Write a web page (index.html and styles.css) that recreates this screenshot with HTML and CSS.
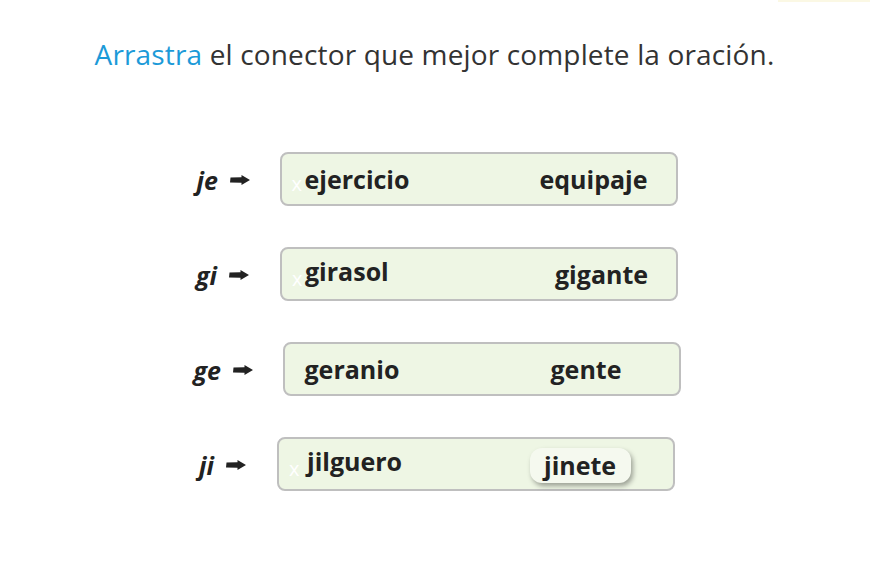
FILE: index.html
```html
<!DOCTYPE html>
<html lang="es">
<head>
<meta charset="utf-8">
<title>Arrastra el conector</title>
<link rel="stylesheet" href="styles.css">
</head>
<body>
<div class="page">
  <div class="topbar"><span class="topline"></span></div>
  <h1 class="title"><span class="accent">Arrastra</span> el conector que mejor complete la oración.</h1>
  <div class="rows">
    <div class="row r1">
      <span class="label">je</span>
      <svg class="arrow" width="20" height="10" viewBox="0 0 20 10"><polygon points="0.5,2.6 11.5,2.2 11.5,0 20,5 11.5,10 11.5,7.8 0,7.6"/></svg>
      <div class="zone">
        <div class="slot1"><span class="x">x</span><span class="word">ejercicio</span></div>
        <div class="slot2"><span class="word">equipaje</span></div>
      </div>
    </div>
    <div class="row r2">
      <span class="label">gi</span>
      <svg class="arrow" width="20" height="10" viewBox="0 0 20 10"><polygon points="0.5,2.6 11.5,2.2 11.5,0 20,5 11.5,10 11.5,7.8 0,7.6"/></svg>
      <div class="zone">
        <div class="slot1"><span class="x">x</span><span class="word raised">girasol</span></div>
        <div class="slot2"><span class="word">gigante</span></div>
      </div>
    </div>
    <div class="row r3">
      <span class="label">ge</span>
      <svg class="arrow" width="20" height="10" viewBox="0 0 20 10"><polygon points="0.5,2.6 11.5,2.2 11.5,0 20,5 11.5,10 11.5,7.8 0,7.6"/></svg>
      <div class="zone">
        <div class="slot1"><span class="word">geranio</span></div>
        <div class="slot2"><span class="word">gente</span></div>
      </div>
    </div>
    <div class="row r4">
      <span class="label">ji</span>
      <svg class="arrow" width="20" height="10" viewBox="0 0 20 10"><polygon points="0.5,2.6 11.5,2.2 11.5,0 20,5 11.5,10 11.5,7.8 0,7.6"/></svg>
      <div class="zone">
        <div class="slot1"><span class="x">x</span><span class="word raised">jilguero</span></div>
        <div class="slot2"><span class="word chip">jinete</span></div>
      </div>
    </div>
  </div>
</div>
</body>
</html>
```

FILE: styles.css
```css
* { box-sizing: border-box; }
html, body { margin: 0; padding: 0; background: #ffffff; }
body { font-family: "Open Sans", "Noto Sans", sans-serif; color: #222; }
.page { width: 874px; height: 574px; overflow: hidden; }
.topbar { display: flex; justify-content: flex-end; height: 2px; }
.topline { width: 92px; height: 2px; margin-right: 4px; background: #fbf8e4; }
.title {
  margin: 34px 0 0 0;
  padding-right: 5px;
  text-align: center;
  font-weight: 400;
  font-size: 28px;
  line-height: 36px;
  color: #333;
  letter-spacing: 0.15px;
}
.accent { color: #1c9ad8; }
.rows { display: flex; flex-direction: column; gap: 41px; margin-top: 80px; padding-left: 0; }
.row { display: flex; align-items: center; justify-content: center; height: 54px; }
.label {
  font-weight: 700;
  font-style: italic;
  font-size: 25px;
  line-height: 30px;
  color: #222;
  width: 33px;
  margin-top: 2px;
}
.arrow { display: block; fill: #222; margin-right: 30px; margin-top: 2px; }
.r2 .label { width: 33px; }
.r2 .arrow { margin-right: 31px; }
.r3 .label { width: 39px; }
.r4 .label { width: 27px; }
.r4 .arrow { margin-right: 31px; }
.zone {
  display: grid;
  align-items: center;
  width: 398px;
  height: 54px;
  border: 2px solid #bfbfbf;
  border-radius: 8px;
  background: #eef6e4;
}
.r1 .zone { grid-template-columns: 258px 1fr; }
.r2 .zone { grid-template-columns: 273px 1fr; }
.r3 .zone { grid-template-columns: 266px 1fr; }
.r4 .zone { grid-template-columns: 251px 1fr; }
.slot1 { display: flex; align-items: center; padding-left: 10px; height: 100%; }
.r3 .slot1 { padding-left: 20px; }
.slot2 { display: flex; align-items: center; height: 100%; }
.x { color: #ffffff; font-size: 20px; line-height: 20px; width: 13px; margin-top: 10px; }
.r4 .x { width: 18px; }
.word { font-weight: 700; font-size: 25px; color: #222; line-height: 30px; }
.raised { margin-bottom: 6px; }
.chip {
  padding: 2px 15px 3px 14px;
  background: #f5f9ef;
  border-radius: 12px;
  box-shadow: 2px 3px 5px rgba(0,0,0,0.35);
  margin-top: 2px;
}
```
